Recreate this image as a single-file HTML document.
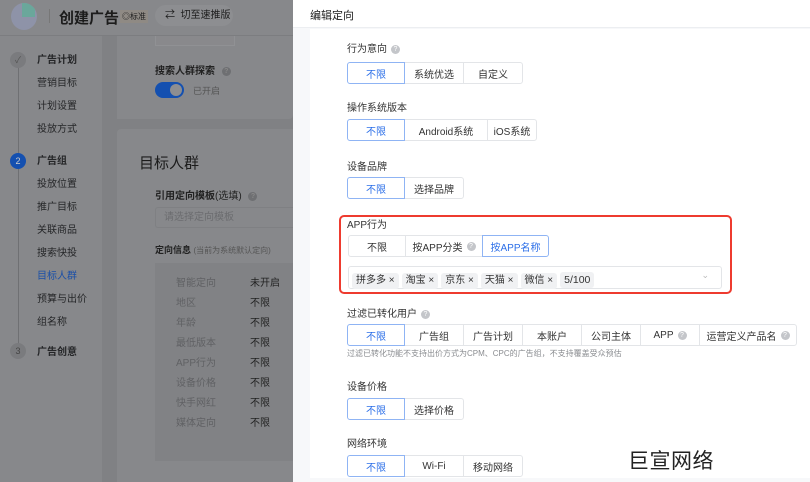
<!DOCTYPE html>
<html><head><meta charset="utf-8">
<style>
*{box-sizing:border-box;margin:0;padding:0}
body{width:810px;height:482px;overflow:hidden;position:relative;font-family:"Liberation Sans","Noto Sans CJK SC",sans-serif;background:#808184;color:#1f1f1f}
.a{position:absolute}
.q{display:inline-block;width:9px;height:9px;border-radius:50%;background:#c4c6ca;color:#fff;font-size:7px;line-height:9px;text-align:center;vertical-align:1px;margin-left:4px}
.seg{position:absolute;display:flex;height:22px}
.seg>span{border:1px solid #e3e5e8;margin-left:-1px;font-size:10px;color:#333;display:flex;align-items:center;justify-content:center;background:#fff}
.seg>span.on{border-color:#8fb4f4;color:#2c6fe8;position:relative;z-index:1}
.seg>span:first-child{border-radius:3px 0 0 3px;margin-left:0}
.seg>span:last-child{border-radius:0 3px 3px 0}
.lbl{position:absolute;left:347px;font-size:10px;color:#333}
.tag{display:inline-block;background:#f0f1f3;border-radius:3px;padding:0 4px;height:16px;line-height:16px;font-size:10px;color:#333;margin-right:3px}
</style></head><body>
<div class="a" style="left:0;top:0;width:293px;height:36px;background:#87888b;border-bottom:1px solid #7c7d80"></div>
<div class="a" style="left:11px;top:3px;width:26px;height:27px;border-radius:50%;background:#8e93a8;overflow:hidden"><div style="position:absolute;left:11px;top:0;width:13px;height:14px;background:#6aa79b"></div></div>
<div class="a" style="left:49px;top:9px;width:1px;height:14px;background:#777"></div>
<div class="a" style="left:59px;top:7px;font-size:15px;font-weight:bold;color:#1c1c1c">创建广告</div>
<div class="a" style="left:120px;top:10px;font-size:8px;color:#1c1c1c;background:#8f8a84;padding:1px 2px">◎标准</div>
<div class="a" style="left:155px;top:5px;width:78px;height:21px;border-radius:11px;background:#8d8e91;font-size:10px;line-height:21px;padding-left:10px;color:#1c1c1c">⇄&nbsp; 切至速推版</div>
<div class="a" style="left:0;top:36px;width:102px;height:446px;background:#87888b"></div>
<div class="a" style="left:18px;top:65px;width:1px;height:290px;background:#6f7073"></div>
<div class="a" style="left:10px;top:52px;width:16px;height:16px;border-radius:50%;background:#7a7b7e;color:#555;font-size:9px;text-align:center;line-height:16px">✓</div>
<div class="a" style="left:10px;top:153px;width:16px;height:16px;border-radius:50%;background:#1450b0;color:#ccc;font-size:9px;text-align:center;line-height:16px">2</div>
<div class="a" style="left:10px;top:343px;width:16px;height:16px;border-radius:50%;background:#7a7b7e;color:#444;font-size:9px;text-align:center;line-height:16px">3</div>
<div class="a" style="left:37px;font-size:10px;color:#252628;line-height:23px;top:49px;width:60px">
<b>广告计划</b><br>营销目标<br>计划设置<br>投放方式<br><div style="height:9px"></div><b>广告组</b><br>投放位置<br>推广目标<br>关联商品<br>搜索快投<br><span style="color:#1a4fa8">目标人群</span><br>预算与出价<br>组名称<br><div style="height:7px"></div><b>广告创意</b></div>
<div class="a" style="left:117px;top:36px;width:176px;height:83px;background:#87888b;border-radius:0 0 4px 0"></div>
<div class="a" style="left:155px;top:36px;width:80px;height:10px;border:1px solid #909194;border-top:none;background:#89898c"></div>
<div class="a" style="left:155px;top:62px;font-size:10px;font-weight:bold;color:#222">搜索人群探索 <span class="q" style="background:#6e6f72;color:#888">?</span></div>
<div class="a" style="left:155px;top:82px;width:29px;height:16px;border-radius:8px;background:#1450b0"><div style="position:absolute;right:2px;top:2px;width:12px;height:12px;border-radius:50%;background:#8d8e91"></div></div>
<div class="a" style="left:193px;top:84px;font-size:9px;color:#555">已开启</div>
<div class="a" style="left:117px;top:129px;width:176px;height:353px;background:#87888b;border-radius:4px 0 0 0"></div>
<div class="a" style="left:139px;top:152px;font-size:15px;color:#1c1c1c">目标人群</div>
<div class="a" style="left:155px;top:187px;font-size:10px;font-weight:bold;color:#222">引用定向模板<span style="font-weight:normal">(选填)</span> <span class="q" style="background:#6e6f72;color:#888">?</span></div>
<div class="a" style="left:155px;top:207px;width:140px;height:21px;border:1px solid #7f8083;border-right:none;border-radius:3px 0 0 3px;font-size:10px;color:#6b6c6f;line-height:19px;padding-left:8px">请选择定向模板</div>
<div class="a" style="left:155px;top:243px;font-size:9px;font-weight:bold;color:#222">定向信息 <span style="font-weight:normal;color:#555;font-size:8px">(当前为系统默认定向)</span></div>
<div class="a" style="left:155px;top:263px;width:140px;height:198px;background:#818285"></div>
<div class="a" style="left:176px;top:274px;font-size:10px;color:#606164;line-height:20px">智能定向<br>地区<br>年龄<br>最低版本<br>APP行为<br>设备价格<br>快手网红<br>媒体定向</div>
<div class="a" style="left:250px;top:274px;font-size:10px;color:#222;line-height:20px">未开启<br>不限<br>不限<br>不限<br>不限<br>不限<br>不限<br>不限</div>

<div class="a" style="left:293px;top:0;width:517px;height:482px;background:#f7f8fa"></div>
<div class="a" style="left:293px;top:0;width:517px;height:28px;background:#fff;border-bottom:1px solid #eceef1"></div>
<div class="a" style="left:310px;top:7px;font-size:11px;color:#1c1c1c">编辑定向</div>
<div class="a" style="left:310px;top:29px;width:500px;height:449px;background:#fff"></div>

<div class="lbl" style="top:40px">行为意向<span class="q">?</span></div>
<div class="seg" style="left:347px;top:62px"><span class="on" style="width:58px">不限</span><span style="width:60px">系统优选</span><span style="width:60px">自定义</span></div>
<div class="lbl" style="top:99px">操作系统版本</div>
<div class="seg" style="left:347px;top:119px"><span class="on" style="width:58px">不限</span><span style="width:84px">Android系统</span><span style="width:50px">iOS系统</span></div>
<div class="lbl" style="top:158px">设备品牌</div>
<div class="seg" style="left:347px;top:177px"><span class="on" style="width:58px">不限</span><span style="width:60px">选择品牌</span></div>

<div class="a" style="left:339px;top:215px;width:393px;height:79px;border:2px solid #ee3b2f;border-radius:5px"></div>
<div class="lbl" style="top:216px">APP行为</div>
<div class="seg" style="left:348px;top:235px"><span style="width:58px">不限</span><span style="width:78px">按APP分类<span class="q">?</span></span><span class="on" style="width:67px">按APP名称</span></div>
<div class="a" style="left:348px;top:266px;width:374px;height:23px;border:1px solid #e3e5e8;border-radius:3px;padding:3px 0 0 3px;white-space:nowrap"><span class="tag">拼多多 ×</span><span class="tag">淘宝 ×</span><span class="tag">京东 ×</span><span class="tag">天猫 ×</span><span class="tag">微信 ×</span><span class="tag" style="font-size:10.5px">5/100</span><span style="position:absolute;right:12px;top:3px;color:#bbb;font-size:9px">⌄</span></div>

<div class="lbl" style="top:305px">过滤已转化用户<span class="q">?</span></div>
<div class="seg" style="left:347px;top:324px"><span class="on" style="width:58px">不限</span><span style="width:60px">广告组</span><span style="width:60px">广告计划</span><span style="width:60px">本账户</span><span style="width:60px">公司主体</span><span style="width:60px">APP<span class="q">?</span></span><span style="width:98px">运营定义产品名<span class="q">?</span></span></div>
<div class="a" style="left:347px;top:348px;font-size:8px;color:#8a8c90">过滤已转化功能不支持出价方式为CPM、CPC的广告组，不支持覆盖受众预估</div>
<div class="lbl" style="top:378px">设备价格</div>
<div class="seg" style="left:347px;top:398px"><span class="on" style="width:58px">不限</span><span style="width:60px">选择价格</span></div>
<div class="lbl" style="top:435px">网络环境</div>
<div class="seg" style="left:347px;top:455px"><span class="on" style="width:58px">不限</span><span style="width:60px">Wi-Fi</span><span style="width:60px">移动网络</span></div>
<div class="a" style="left:628px;top:445px;font-size:21px;color:#222;letter-spacing:0.5px">巨宣网络</div>
</body></html>
